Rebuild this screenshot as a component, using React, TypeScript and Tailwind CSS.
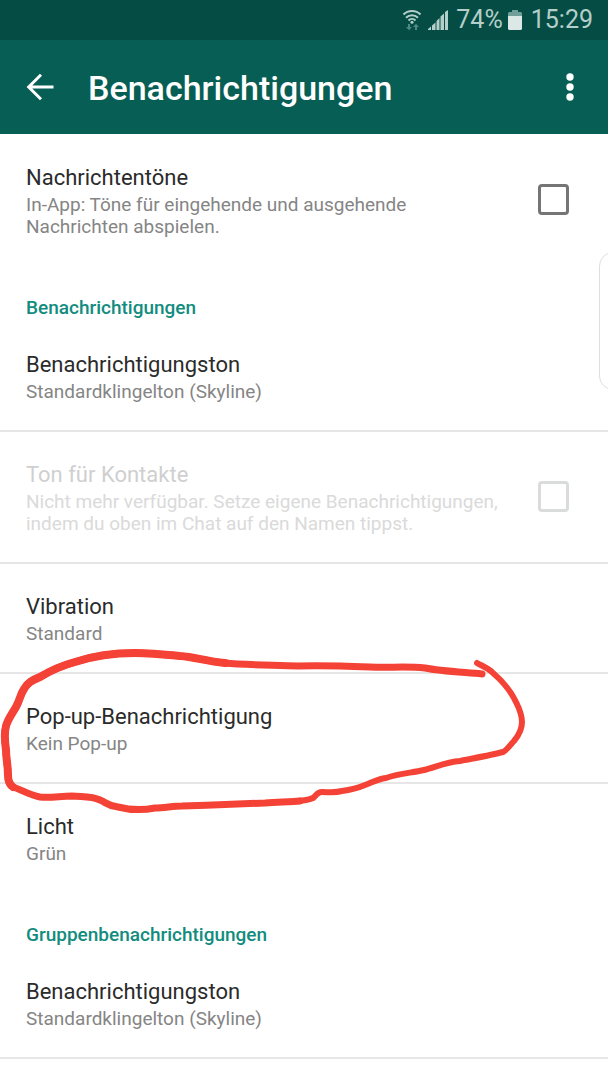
import { ReactNode } from 'react';

interface SettingProps {
  title: string;
  summary: string;
  divider?: boolean;
  children?: ReactNode;
}

interface CheckSettingProps {
  id: string;
  title: string;
  summary: string;
  disabled?: boolean;
  divider?: boolean;
}

function WifiIcon() {
  return (
    <svg width="20" height="22" viewBox="0 0 20 22" fill="none" stroke="#b4cfca" strokeWidth="2">
      <path d="M1.5 5.5C6 0.8 14 0.8 18.5 5.5" />
      <path d="M4 8.7C7.3 5.3 12.7 5.3 16 8.7" />
      <path d="M6.5 11.5C8.5 9.5 11.5 9.5 13.5 11.5" />
      <circle cx="10" cy="13.3" r="1.5" fill="#b4cfca" stroke="none" />
      <path d="M6 15v3H4l3 3.2L10 18H8v-3zM13 21v-3h-2l3-3.2L17 18h-2v3z" fill="#4f8a82" stroke="none" />
    </svg>
  );
}

function SignalIcon() {
  return (
    <svg width="20" height="20" viewBox="0 0 20 20" fill="#b4cfca">
      <path d="M0 20v-1l3-2.5V20zM4 20v-4.500l3.500-3V20zM8.500 20v-9l3-3v12zM12.500 20V6.500l3.500-3V20zM17 20V2l3-2v20z" />
    </svg>
  );
}

function BatteryIcon() {
  return (
    <svg width="14" height="20" viewBox="0 0 14 20">
      <path d="M4 0h6v2h3l1 1v4H0V3l1-1h3z" fill="#6f9f98" />
      <path d="M0 6h14v13l-1 1H1l-1-1z" fill="#dce8e6" />
    </svg>
  );
}

function StatusBar() {
  return (
    <div className="flex h-10 items-center justify-end bg-[#054d44] pr-[15px] text-[25px] leading-10 text-[#b4cfca]">
      <WifiIcon />
      <span className="ml-[6px]">
        <SignalIcon />
      </span>
      <span className="ml-2">74%</span>
      <span className="ml-[5px]">
        <BatteryIcon />
      </span>
      <span className="ml-[9px]">15:29</span>
    </div>
  );
}

function AppBar() {
  return (
    <header className="flex h-[94px] items-center bg-[#075e54] pr-6 pl-[26px] text-white">
      <button type="button" aria-label="Zurück">
        <svg width="28" height="28" viewBox="0 0 28 28" fill="none" stroke="currentColor" strokeWidth="3">
          <path d="M27.500 14H3M15 1.700L2.700 14L15 26.300" />
        </svg>
      </button>
      <h1 className="ml-[34px] flex-1 pt-[2px] text-[34px] leading-10 font-medium">Benachrichtigungen</h1>
      <button type="button" aria-label="Weitere Optionen" className="flex w-7 justify-center">
        <svg width="8" height="28" viewBox="0 0 8 28" fill="currentColor">
          <circle cx="4" cy="4" r="3.700" />
          <circle cx="4" cy="14" r="3.700" />
          <circle cx="4" cy="24" r="3.700" />
        </svg>
      </button>
    </header>
  );
}

function SectionTitle({ children }: { children: ReactNode }) {
  return (
    <h2 className="px-[26px] pt-8 pb-[3px] text-[19px] leading-[22px] font-medium text-[#128c7e]">{children}</h2>
  );
}

function Setting({ title, summary, divider = true, children }: SettingProps) {
  return (
    <div className={divider ? 'relative border-b-2 border-[#e6e6e6]' : 'relative'}>
      <button type="button" className="block w-full px-[26px] pt-[29px] pb-[27px] text-left">
        <span className="block text-[22px] leading-7 text-[#2b2b2b]">{title}</span>
        <span className="mt-[2px] block text-[19px] leading-[22px] text-[#858585]">{summary}</span>
      </button>
      {children}
    </div>
  );
}

function CheckSetting({ id, title, summary, disabled = false, divider = false }: CheckSettingProps) {
  return (
    <div
      className={`flex items-center pt-[29px] pr-[39px] pb-[27px] pl-[26px] ${
        divider ? 'border-b-2 border-[#e6e6e6]' : ''
      }`}
    >
      <label htmlFor={id} className="flex-1 pr-8">
        <span className={`block text-[22px] leading-7 ${disabled ? 'text-[#cfcfcf]' : 'text-[#2b2b2b]'}`}>
          {title}
        </span>
        <span
          className={`mt-[2px] block text-[19px] leading-[22px] ${disabled ? 'text-[#dadada]' : 'text-[#858585]'}`}
        >
          {summary}
        </span>
      </label>
      <input
        id={id}
        type="checkbox"
        disabled={disabled}
        className="mb-1 size-[31px] shrink-0 appearance-none rounded-[4px] border-[3px] border-[#757575] checked:bg-[#128c7e] disabled:border-[#dadcdb]"
      />
    </div>
  );
}

// Freehand marker loop around a setting
function MarkerLoop() {
  return (
    <svg
      className="pointer-events-none absolute -top-[34px] left-0 z-10"
      width="540"
      height="180"
      viewBox="0 0 540 180"
      fill="none"
      stroke="#f44336"
      strokeLinecap="round"
      strokeLinejoin="round"
    >
      <path
        strokeWidth="7"
        d="M482 34C460 32 440 31 425 28C405 26 390 28 370 27C345 26 320 25 298 26C275 25 245 25 225 23C205 21 195 17 180 16C160 14 150 13 135 13C110 13 90 17 75 22C60 26 50 31 40 37C33 40 28 42 24 49C20 55 20 60 16 67C12 74 8 79 6 86C4 93 5 103 6 110C6 119 8 125 8 135C8 142 10 146 13 147C20 149 29 155 40 157C52 158 60 156 72 156C84 157 92 156 100 160C107 163 108 166 118 167C130 170 145 170 155 168C165 168 172 166 182 166C210 165 240 164 265 163C280 162 292 162 300 161"
      />
      <path
        strokeWidth="6"
        d="M298 161C305 160 309 160 313 158C317 155 317 152 322 152C329 152 335 153 342 151C350 150 358 148 365 145C373 142 378 139 386 138C400 133 412 133 424 130C436 127 446 122 460 121C475 118 492 115 503 112C507 110 510 105 514 101C519 95 522 88 522 82C522 75 519 68 516 62C510 49 500 39 493 33C488 28 482 26 477 23"
      />
      <path
        strokeWidth="8"
        d="M225 23C205 21 195 17 180 16C160 14 150 13 135 13C110 13 90 17 75 22C60 26 50 31 40 37C33 40 28 42 24 49C20 55 20 60 16 67C12 74 8 79 6 86C4 93 5 103 6 110C6 119 8 125 8 135C8 142 10 145 13 147"
      />
    </svg>
  );
}

export default function App() {
  return (
    <div className="relative min-h-screen overflow-hidden bg-white pb-5 font-[Roboto,sans-serif]">
      <StatusBar />
      <AppBar />
      <main className="pt-px">
        <CheckSetting
          id="message-tones"
          title="Nachrichtentöne"
          summary="In-App: Töne für eingehende und ausgehende Nachrichten abspielen."
        />

        <SectionTitle>Benachrichtigungen</SectionTitle>
        <Setting title="Benachrichtigungston" summary="Standardklingelton (Skyline)" />
        <CheckSetting
          id="contact-tones"
          title="Ton für Kontakte"
          summary="Nicht mehr verfügbar. Setze eigene Benachrichtigungen, indem du oben im Chat auf den Namen tippst."
          disabled
          divider
        />
        <Setting title="Vibration" summary="Standard" />
        <Setting title="Pop-up-Benachrichtigung" summary="Kein Pop-up">
          <MarkerLoop />
        </Setting>
        <Setting title="Licht" summary="Grün" divider={false} />

        <SectionTitle>Gruppenbenachrichtigungen</SectionTitle>
        <Setting title="Benachrichtigungston" summary="Standardklingelton (Skyline)" />
      </main>

      {/* Edge panel handle */}
      <div className="absolute top-[252px] -right-[10px] h-[138px] w-[19px] rounded-l-[14px] border border-[#dedede] bg-white" />
    </div>
  );
}
